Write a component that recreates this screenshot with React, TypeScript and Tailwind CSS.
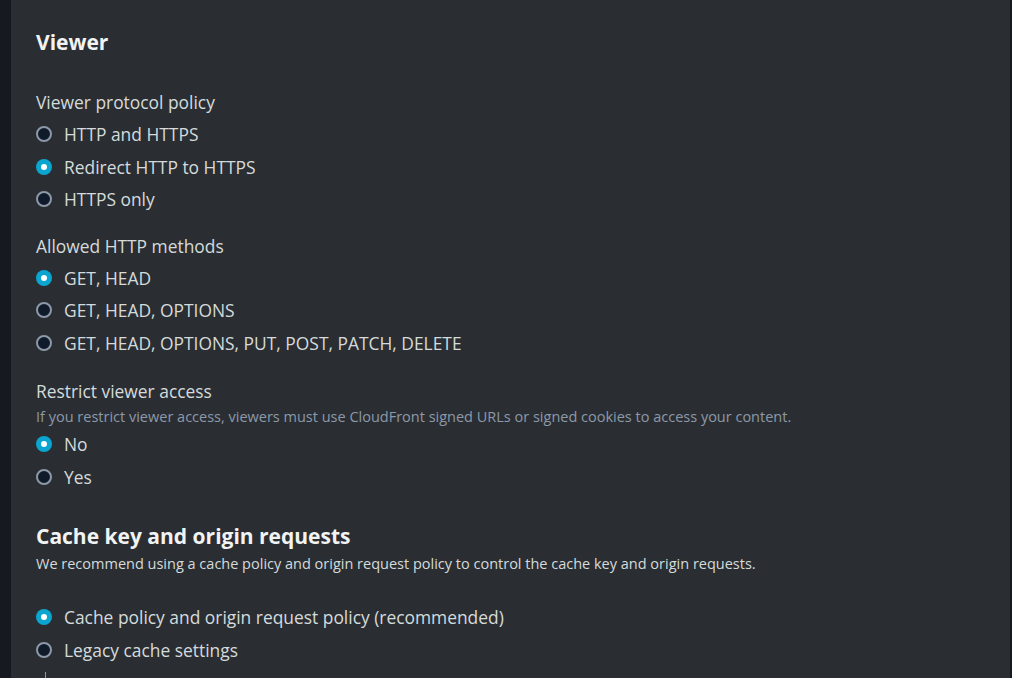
import React from 'react';

type Option = { label: string; checked?: boolean };

function Radio({ label, checked }: Option) {
    return (
        <label className="flex h-[32.5px] items-center gap-3">
            {checked ? (
                <span className="flex h-4 w-4 shrink-0 items-center justify-center rounded-full bg-[#0ba5d0]">
                    <span className="h-1.5 w-1.5 rounded-full bg-white" />
                </span>
            ) : (
                <span className="h-4 w-4 shrink-0 rounded-full border-2 border-[#8d99a8] bg-[#0f1b2a]" />
            )}
            <span className="text-[17.4px] text-[#d5dbdb]">{label}</span>
        </label>
    );
}

function Group({ title, hint, options }: { title: string; hint?: string; options: Option[] }) {
    return (
        <div className={hint ? 'mt-[2px] flex flex-col' : 'flex flex-col'}>
            <div className="text-[17.4px] leading-[24px] text-[#d5dbdb]">{title}</div>
            {hint && <div className="mt-[4px] text-[14.5px] leading-[20px] text-[#8d99a8]">{hint}</div>}
            <div className={hint ? 'flex flex-col pt-[1px]' : 'flex flex-col pt-[4px]'}>
                {options.map((o) => (
                    <Radio key={o.label} {...o} />
                ))}
            </div>
        </div>
    );
}

export default function App() {
    return (
        <div
            className="flex h-[678px] w-[1012px] overflow-hidden bg-[#16191f]"
            style={{ fontFamily: '"Open Sans", "Noto Sans", sans-serif' }}
        >
            <div className="w-[11px] shrink-0" />
            <div className="flex-1 bg-[#2a2e33] pl-[25px] pt-[27px]">
                {/* Viewer */}
                <h2 className="text-[21px] font-bold leading-[30px] text-[#f2f3f3]">Viewer</h2>

                <div className="mt-[33px] flex flex-col gap-[18px]">
                    <Group
                        title="Viewer protocol policy"
                        options={[
                            { label: 'HTTP and HTTPS' },
                            { label: 'Redirect HTTP to HTTPS', checked: true },
                            { label: 'HTTPS only' },
                        ]}
                    />
                    <Group
                        title="Allowed HTTP methods"
                        options={[
                            { label: 'GET, HEAD', checked: true },
                            { label: 'GET, HEAD, OPTIONS' },
                            { label: 'GET, HEAD, OPTIONS, PUT, POST, PATCH, DELETE' },
                        ]}
                    />
                    <Group
                        title="Restrict viewer access"
                        hint="If you restrict viewer access, viewers must use CloudFront signed URLs or signed cookies to access your content."
                        options={[{ label: 'No', checked: true }, { label: 'Yes' }]}
                    />
                </div>

                {/* Cache key */}
                <h2 className="mt-[28px] text-[21px] font-bold leading-[30px] text-[#f2f3f3]">
                    Cache key and origin requests
                </h2>
                <p className="mt-[2px] text-[14.5px] leading-[22px] text-[#d5dbdb]">
                    We recommend using a cache policy and origin request policy to control the cache key and origin
                    requests.
                </p>
                <div className="mt-[26px] flex flex-col">
                    <Radio label="Cache policy and origin request policy (recommended)" checked />
                    <Radio label="Legacy cache settings" />
                </div>
                <div className="ml-[9px] mt-[6px] h-4 w-px bg-[#8d99a8]" />
            </div>
            <div className="w-[2px] shrink-0" />
        </div>
    );
}
